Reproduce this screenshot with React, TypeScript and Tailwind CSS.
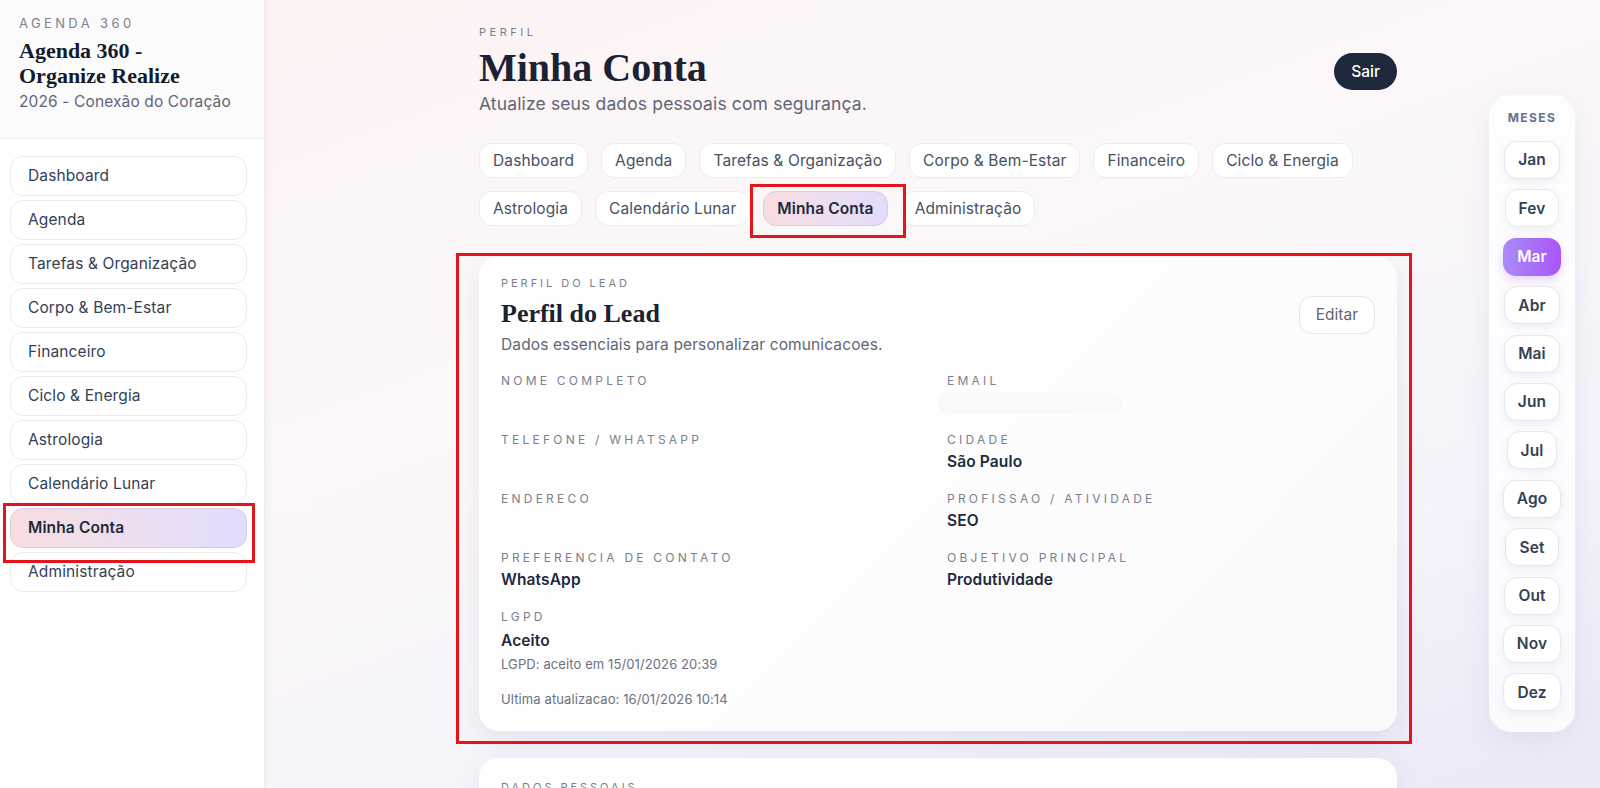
import React from "react";

const navItems = [
  "Dashboard",
  "Agenda",
  "Tarefas & Organização",
  "Corpo & Bem-Estar",
  "Financeiro",
  "Ciclo & Energia",
  "Astrologia",
  "Calendário Lunar",
  "Minha Conta",
  "Administração",
];

const months = ["Jan", "Fev", "Mar", "Abr", "Mai", "Jun", "Jul", "Ago", "Set", "Out", "Nov", "Dez"];

const serif = "font-['Liberation_Serif','DejaVu_Serif',serif]";

function Field({ label, value }: { label: string; value?: string }) {
  return (
    <div className="flex flex-col">
      <div className="text-[12px] leading-[16px] tracking-[0.27em] text-[#7a808c] uppercase">{label}</div>
      <div className="mt-[3px] min-h-[22px] text-[15.5px] leading-[22px] tracking-[0.008em] font-semibold text-[#1e293b]">{value}</div>
    </div>
  );
}

export default function App() {
  return (
    <div className="relative flex h-[788px] w-[1600px] overflow-hidden font-['Inter','Noto_Sans',sans-serif] bg-[linear-gradient(160deg,#fdf2f2_0%,#fcf8f9_45%,#f5f3fb_75%,#ece9f8_100%)]">
      {/* Sidebar */}
      <aside className="flex w-[265px] shrink-0 flex-col border-r border-[#ececef] bg-white shadow-[2px_0_8px_rgba(0,0,0,0.04)]">
        <div className="border-b border-[#ececef] bg-[#fbfbfc] px-[19px] pt-[15px] pb-[25px]">
          <div className="text-[13px] leading-[17px] tracking-[0.26em] text-[#7b818c]">AGENDA 360</div>
          <div className={`${serif} mt-[6px] text-[22px] leading-[25px] font-bold text-[#141b2b]`}>
            Agenda 360 -<br />Organize Realize
          </div>
          <div className="mt-[3px] text-[15.5px] leading-[22px] tracking-[0.008em] text-[#5f6677]">2026 - Conexão do Coração</div>
        </div>
        <nav className="flex flex-col gap-[4px] pl-[10px] pr-[17px] pt-[17px]">
          {navItems.map((n) => {
            const active = n === "Minha Conta";
            return (
              <div
                key={n}
                className={
                  active
                    ? "flex h-[40px] items-center rounded-[13px] border border-[#d4cde6] bg-[linear-gradient(90deg,#f8dde0_0%,#eddff0_50%,#e3dcfc_100%)] px-[17px] text-[15.5px] tracking-[0.008em] font-semibold text-[#1e293b]"
                    : "flex h-[40px] items-center rounded-[13px] border border-[#ececef] bg-white px-[17px] text-[15.5px] tracking-[0.008em] text-[#334155]"
                }
              >
                {n}
              </div>
            );
          })}
        </nav>
      </aside>

      {/* Main */}
      <main className="relative flex-1">
        <div className="ml-[214px] w-[918px] pt-[24px]">
          <div className="flex items-start justify-between">
            <div>
              <div className="text-[11px] leading-[16px] tracking-[0.32em] text-[#7b818c]">PERFIL</div>
              <h1 className={`${serif} mt-[4px] text-[40px] leading-[48px] font-bold text-[#1a2233]`}>Minha Conta</h1>
              <div className="text-[17.5px] leading-[24px] tracking-[0.008em] text-[#5f6677]">Atualize seus dados pessoais com segurança.</div>
            </div>
            <button className="mt-[29px] flex h-[37px] items-center rounded-full bg-[#1e293b] px-[17px] text-[15.5px] font-medium text-white">
              Sair
            </button>
          </div>

          <div className="mt-[27px] flex flex-wrap gap-x-[13px] gap-y-[13px]">
            {navItems.map((n) => {
              const active = n === "Minha Conta";
              return (
                <div
                  key={n}
                  className={
                    active
                      ? "flex h-[35px] items-center rounded-[13px] border border-[#d4cde6] bg-[linear-gradient(90deg,#f8dde0_0%,#eddff0_50%,#e3dcfc_100%)] px-[13px] text-[15.5px] tracking-[0.008em] font-semibold text-[#1e293b]"
                      : "flex h-[35px] items-center rounded-[13px] border border-[#ececef] bg-white px-[13px] text-[15.5px] tracking-[0.008em] text-[#475163]"
                  }
                >
                  {n}
                </div>
              );
            })}
          </div>

          {/* Card 1 */}
          <section className="mt-[31px] rounded-[20px] bg-[linear-gradient(135deg,#ffffff_0%,#fdfdfe_50%,#f9f9fc_100%)] px-[22px] pt-[18px] pb-[22px] shadow-[0_10px_28px_rgba(40,40,80,0.08)]">
            <div className="flex items-start justify-between">
              <div>
                <div className="text-[11px] leading-[16px] tracking-[0.27em] text-[#7b818c]">PERFIL DO LEAD</div>
                <h2 className={`${serif} mt-[6px] text-[26px] leading-[34px] font-bold text-[#1a2233]`}>Perfil do Lead</h2>
                <div className="mt-[3px] text-[15.5px] leading-[22px] tracking-[0.008em] text-[#5f6677]">Dados essenciais para personalizar comunicacoes.</div>
              </div>
              <button className="mt-[21px] flex h-[38px] items-center rounded-[13px] border border-[#e6e7eb] bg-white px-[16px] text-[15.5px] text-[#5f6677]">
                Editar
              </button>
            </div>

            <div className="mt-[17px] grid grid-cols-2 gap-x-[18px] gap-y-[18px]">
              <Field label="Nome completo" />
              <div className="flex flex-col">
                <div className="text-[12px] leading-[16px] tracking-[0.27em] text-[#7a808c]">EMAIL</div>
                <div className="mt-[3px] h-[22px] w-[184px] -ml-[9px] rounded-full bg-[#f9f9fb]" />
              </div>
              <Field label="Telefone / WhatsApp" />
              <Field label="Cidade" value="São Paulo" />
              <Field label="Endereco" />
              <Field label="Profissao / Atividade" value="SEO" />
              <Field label="Preferencia de contato" value="WhatsApp" />
              <Field label="Objetivo principal" value="Produtividade" />
              <div className="flex flex-col">
                <div className="text-[12px] leading-[16px] tracking-[0.27em] text-[#7a808c]">LGPD</div>
                <div className="mt-[5px] text-[15.5px] leading-[22px] tracking-[0.008em] font-semibold text-[#1e293b]">Aceito</div>
                <div className="mt-[2px] text-[13px] leading-[20px] tracking-[0.008em] text-[#6b7280]">LGPD: aceito em 15/01/2026 20:39</div>
                <div className="mt-[15px] text-[13px] leading-[20px] tracking-[0.008em] text-[#6b7280]">Ultima atualizacao: 16/01/2026 10:14</div>
              </div>
            </div>
          </section>

          {/* Card 2 */}
          <section className="mt-[27px] h-[120px] rounded-[20px] bg-white/90 px-[22px] pt-[21px] shadow-[0_10px_28px_rgba(40,40,80,0.08)]">
            <div className="text-[11px] leading-[16px] tracking-[0.27em] text-[#7b818c]">DADOS PESSOAIS</div>
          </section>
        </div>

        {/* Month rail */}
        <div className="absolute top-[95px] right-[25px] flex w-[86px] flex-col items-center rounded-[22px] bg-white/75 pt-[15px] pb-[21px] shadow-[0_8px_30px_rgba(60,50,120,0.08)]">
          <div className="text-[12px] leading-[16px] font-bold tracking-[0.12em] text-[#64748b]">MESES</div>
          <div className="mt-[15px] flex flex-col items-center gap-[10.4px]">
            {months.map((m) => (
              <div
                key={m}
                className={
                  m === "Mar"
                    ? "flex h-[38px] items-center rounded-[13px] bg-[linear-gradient(90deg,#a98bf8_0%,#a855f7_100%)] px-[14px] text-[15.5px] tracking-[0.008em] font-semibold text-white shadow-[0_4px_10px_rgba(168,85,247,0.25)]"
                    : "flex h-[38px] items-center rounded-[13px] border border-[#e6e8f0] bg-white px-[13px] text-[15.5px] tracking-[0.008em] font-semibold text-[#334155] shadow-[0_3px_8px_rgba(60,60,110,0.08)]"
                }
              >
                {m}
              </div>
            ))}
          </div>
        </div>
      </main>

      {/* Red annotation boxes */}
      <div className="pointer-events-none absolute left-[3px] top-[503px] h-[60px] w-[252px] border-[3px] border-[#e3151b]" />
      <div className="pointer-events-none absolute left-[750px] top-[184px] h-[54px] w-[156px] border-[3px] border-[#e3151b]" />
      <div className="pointer-events-none absolute left-[456px] top-[253px] h-[491px] w-[956px] border-[3px] border-[#e3151b]" />
    </div>
  );
}
